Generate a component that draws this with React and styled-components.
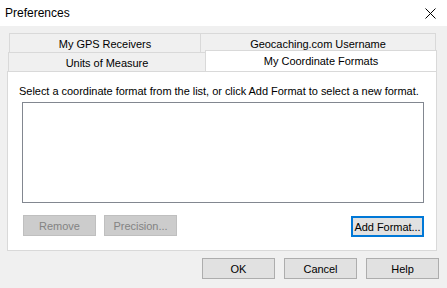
import React from "react";
import styled, { createGlobalStyle } from "styled-components";

const Global = createGlobalStyle`
  html, body { margin: 0; padding: 0; background: #f0f0f0; }
  body { font-family: "Liberation Sans", Arial, sans-serif; font-size: 11px; letter-spacing: -0.03px; color: #000; }
  * { box-sizing: border-box; }
`;

const Window = styled.div`
  width: 447px;
  height: 288px;
  display: flex;
  flex-direction: column;
  background: #f0f0f0;
  overflow: hidden;
`;

const TitleBar = styled.div`
  height: 26px;
  flex: none;
  background: #ffffff;
  display: flex;
  align-items: center;
  justify-content: space-between;
  padding: 0 11px 0 5px;
  font-size: 12px;
  letter-spacing: 0;
`;

const Content = styled.div`
  flex: 1;
  display: flex;
  flex-direction: column;
  padding: 7px 8px 0 7px;
`;

const TabRow = styled.div`
  display: flex;
  height: ${(p) => p.$h}px;
  margin-left: ${(p) => p.$ml}px;
  margin-right: ${(p) => p.$mr}px;
`;

const Tab = styled.div`
  width: ${(p) => p.$w}px;
  flex: ${(p) => (p.$grow ? 1 : "none")};
  display: flex;
  align-items: center;
  justify-content: center;
  border: 1px solid #d9d9d9;
  border-bottom: none;
  margin-left: ${(p) => (p.$first ? 0 : -1)}px;
  background: #f0f0f0;
  padding-top: 1px;
  white-space: nowrap;
`;

const SelectedTab = styled(Tab)`
  background: #ffffff;
  position: relative;
  z-index: 1;
  margin-top: -2px;
  height: 21px;
  margin-bottom: -1px;
  padding-top: 0;
  padding-bottom: 1px;
`;

const Panel = styled.div`
  height: 180px;
  margin-right: 2px;
  background: #ffffff;
  border: 1px solid #d9d9d9;
  display: flex;
  flex-direction: column;
  padding: 12px 12px 0 14px;
`;

const Hint = styled.div`
  margin-left: -3px;
  height: 15px;
  line-height: 15px;
  white-space: nowrap;
`;

const ListBox = styled.div`
  margin-top: 3px;
  height: 101px;
  border: 1px solid #828790;
  background: #ffffff;
`;

const PanelButtons = styled.div`
  display: flex;
  align-items: flex-start;
  gap: 8px;
  margin-top: 12px;
  margin-left: 1px;
`;

const Button = styled.button`
  width: 73px;
  height: 21px;
  font-family: inherit;
  font-size: 11px;
  letter-spacing: inherit;
  padding: 0;
  background: ${(p) => (p.$disabled ? "#cccccc" : "#e1e1e1")};
  color: ${(p) => (p.$disabled ? "#838383" : "#000000")};
  border: ${(p) => (p.$default ? "2px solid #0078d7" : `1px solid ${p.$disabled ? "#bfbfbf" : "#adadad"}`)};
  margin-left: ${(p) => (p.$push ? "auto" : "0")};
  margin-top: ${(p) => p.$mt || 0}px;
`;

const DialogButtons = styled.div`
  display: flex;
  justify-content: flex-end;
  gap: 9px;
  margin-top: 7px;
`;

const CloseIcon = () => (
  <svg width="11" height="11" viewBox="0 0 11 11">
    <path d="M0.5 0.5 L10.5 10.5 M10.5 0.5 L0.5 10.5" stroke="#000" strokeWidth="1" fill="none" />
  </svg>
);

export default function App() {
  return (
    <Window>
      <Global />
      <TitleBar>
        <span>Preferences</span>
        <CloseIcon />
      </TitleBar>
      <Content>
        <TabRow $h={19} $ml={2} $mr={3}>
          <Tab $first $w={192}>My GPS Receivers</Tab>
          <Tab $grow>Geocaching.com Username</Tab>
        </TabRow>
        <TabRow $h={19} $ml={1} $mr={2}>
          <Tab $first $w={198}>Units of Measure</Tab>
          <SelectedTab $grow>My Coordinate Formats</SelectedTab>
        </TabRow>
        <Panel>
          <Hint>Select a coordinate format from the list, or click Add Format to select a new format.</Hint>
          <ListBox />
          <PanelButtons>
            <Button $disabled disabled>Remove</Button>
            <Button $disabled disabled>Precision...</Button>
            <Button $default $push $mt={1}>Add Format...</Button>
          </PanelButtons>
        </Panel>
        <DialogButtons>
          <Button>OK</Button>
          <Button>Cancel</Button>
          <Button>Help</Button>
        </DialogButtons>
      </Content>
    </Window>
  );
}
